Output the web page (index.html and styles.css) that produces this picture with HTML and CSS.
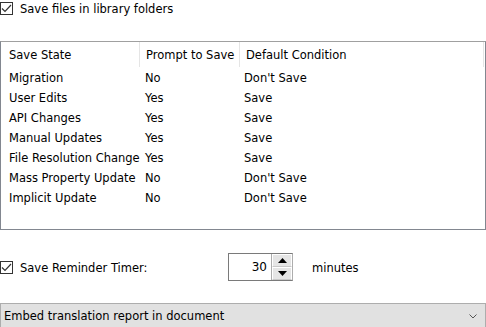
FILE: index.html
```html
<!DOCTYPE html>
<html lang="en">
<head>
    <meta charset="UTF-8">
    <title>Save Options</title>
    <link rel="stylesheet" href="styles.css">
</head>
<body>
    <label class="check top-check">
        <span class="box"><svg width="11" height="11" viewBox="0 0 11 11"><path d="M1 5.5 L4 8.5 L10 2" fill="none" stroke="#333" stroke-width="1.2"/></svg></span>
        Save files in library folders
    </label>

    <div class="listbox">
        <div class="row head">
            <span class="c1">Save State</span>
            <span class="c2">Prompt to Save</span>
            <span class="c3">Default Condition</span>
        </div>
        <div class="row"><span class="c1">Migration</span><span class="c2">No</span><span class="c3">Don't Save</span></div>
        <div class="row"><span class="c1">User Edits</span><span class="c2">Yes</span><span class="c3">Save</span></div>
        <div class="row"><span class="c1">API Changes</span><span class="c2">Yes</span><span class="c3">Save</span></div>
        <div class="row"><span class="c1">Manual Updates</span><span class="c2">Yes</span><span class="c3">Save</span></div>
        <div class="row"><span class="c1">File Resolution Change</span><span class="c2">Yes</span><span class="c3">Save</span></div>
        <div class="row"><span class="c1">Mass Property Update</span><span class="c2">No</span><span class="c3">Don't Save</span></div>
        <div class="row"><span class="c1">Implicit Update</span><span class="c2">No</span><span class="c3">Don't Save</span></div>
    </div>

    <div class="timer">
        <label class="check">
            <span class="box"><svg width="11" height="11" viewBox="0 0 11 11"><path d="M1 5.5 L4 8.5 L10 2" fill="none" stroke="#333" stroke-width="1.2"/></svg></span>
            Save Reminder Timer:
        </label>
        <div class="spin">
            <span class="value">30</span>
            <div class="arrows">
                <span class="arrow"><svg width="9" height="5" viewBox="0 0 9 5"><path d="M0 5 L4.5 0 L9 5 Z" fill="#000"/></svg></span>
                <span class="arrow"><svg width="9" height="5" viewBox="0 0 9 5"><path d="M0 0 L4.5 5 L9 0 Z" fill="#000"/></svg></span>
            </div>
        </div>
        <span class="unit">minutes</span>
    </div>

    <div class="combo">
        <span>Embed translation report in document</span>
        <svg width="8" height="5" viewBox="0 0 8 5"><path d="M0.5 0.5 L4 4 L7.5 0.5" fill="none" stroke="#555" stroke-width="1"/></svg>
    </div>
</body>
</html>
```

FILE: styles.css
```css
body {
    margin: 0;
    width: 486px;
    height: 327px;
    overflow: hidden;
    background: #ffffff;
    color: #000000;
    font-family: Tahoma, "DejaVu Sans", sans-serif;
    font-size: 11.5px;
}

.check {
    display: flex;
    align-items: center;
    gap: 7px;
    height: 15px;
}

.top-check {
    margin-top: 1px;
}

.box {
    width: 11px;
    height: 11px;
    border: 1px solid #333333;
    display: flex;
    align-items: center;
    justify-content: center;
    background: #ffffff;
}

.listbox {
    margin-top: 25px;
    height: 187px;
    border: 1px solid #828790;
    border-top-color: #a0a0a0;
}

.row {
    display: flex;
    height: 20px;
    align-items: center;
}

.row span {
    padding-left: 6px;
    padding-top: 2px;
    white-space: nowrap;
}

.row .c1 {
    padding-left: 8px;
}

.head {
    height: 25px;
}

.c1 { width: 130px; }
.c2 { width: 93px; }
.c3 { width: 237px; }

.head .c1,
.head .c2,
.head .c3 {
    height: 23px;
    line-height: 23px;
    border-right: 1px solid #e5e5e5;
}

.timer {
    display: flex;
    align-items: center;
    margin-top: 22px;
    height: 30px;
}

.timer .check {
    width: 228px;
    padding-top: 2px;
}

.timer .box {
    margin-top: -1px;
}

.spin {
    display: flex;
    width: 63px;
    height: 26px;
    border: 1px solid #7a7a7a;
    border-right-color: #adadad;
}

.value {
    flex: 1;
    text-align: right;
    padding-right: 4px;
    line-height: 27px;
    font-size: 12px;
}

.arrows {
    width: 20px;
    display: flex;
    flex-direction: column;
    border-left: 1px solid #adadad;
}

.arrow {
    flex: 1;
    display: flex;
    align-items: center;
    justify-content: center;
    background: #e5e5e5;
    border: 1px solid #ffffff;
    border-bottom-color: #c8c8c8;
}

.unit {
    margin-left: 19px;
    padding-top: 1px;
}

.combo {
    margin-top: 21px;
    height: 22px;
    background: #e1e1e1;
    border: 1px solid #adadad;
    display: flex;
    align-items: center;
    justify-content: space-between;
    padding: 1px 8px 0 3px;
}
```
